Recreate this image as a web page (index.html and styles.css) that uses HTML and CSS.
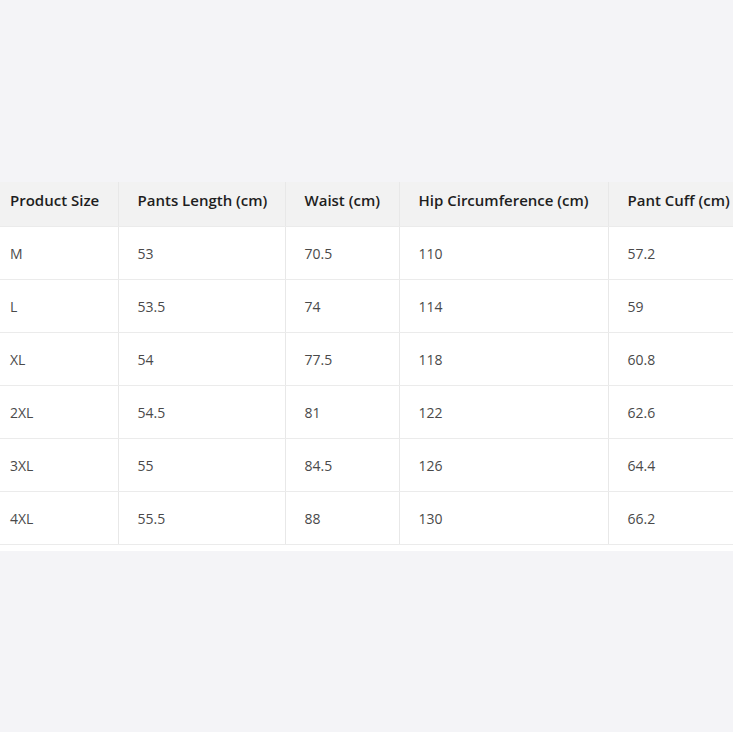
FILE: index.html
```html
<!DOCTYPE html>
<html>
<head>
<meta charset="utf-8">
<link rel="stylesheet" href="styles.css">
</head>
<body>
<div class="wrap">
  <table class="size-table">
    <colgroup>
      <col class="c1"><col class="c2"><col class="c3"><col class="c4"><col class="c5">
    </colgroup>
    <thead>
      <tr><th>Product Size</th><th>Pants Length (cm)</th><th>Waist (cm)</th><th>Hip Circumference (cm)</th><th>Pant Cuff (cm)</th></tr>
    </thead>
    <tbody>
      <tr><td>M</td><td>53</td><td>70.5</td><td>110</td><td>57.2</td></tr>
      <tr><td>L</td><td>53.5</td><td>74</td><td>114</td><td>59</td></tr>
      <tr><td>XL</td><td>54</td><td>77.5</td><td>118</td><td>60.8</td></tr>
      <tr><td>2XL</td><td>54.5</td><td>81</td><td>122</td><td>62.6</td></tr>
      <tr><td>3XL</td><td>55</td><td>84.5</td><td>126</td><td>64.4</td></tr>
      <tr><td>4XL</td><td>55.5</td><td>88</td><td>130</td><td>66.2</td></tr>
    </tbody>
  </table>
</div>
</body>
</html>
```
FILE: styles.css
```css
html, body { margin: 0; padding: 0; }
body {
  background: #f4f4f7;
  min-height: 100vh;
  display: flex;
  flex-direction: column;
  justify-content: center;
  font-family: "Open Sans", "Noto Sans", sans-serif;
  overflow: hidden;
}
.wrap {
  background: #fff;
  overflow: hidden;
  padding-bottom: 6px;
  margin-top: 1px;
}
.size-table {
  border-collapse: collapse;
  table-layout: fixed;
  width: 820px;
  font-size: 14px;
}
.c1 { width: 118px; }
.c2 { width: 167px; }
.c3 { width: 114px; }
.c4 { width: 209px; }
.c5 { width: 212px; }
th, td {
  text-align: left;
  padding: 0 0 0 19px;
  border-right: 1px solid #e8e8e8;
  border-bottom: 1px solid #ebebeb;
  white-space: nowrap;
}
th:first-child, td:first-child { padding-left: 10px; }
th {
  background: #f2f2f2;
  color: #1e1e1e;
  font-weight: 600;
  font-size: 15px;
  height: 36px;
  padding-bottom: 8px;
}
td {
  color: #4a4a4a;
  height: 52px;
}
```
